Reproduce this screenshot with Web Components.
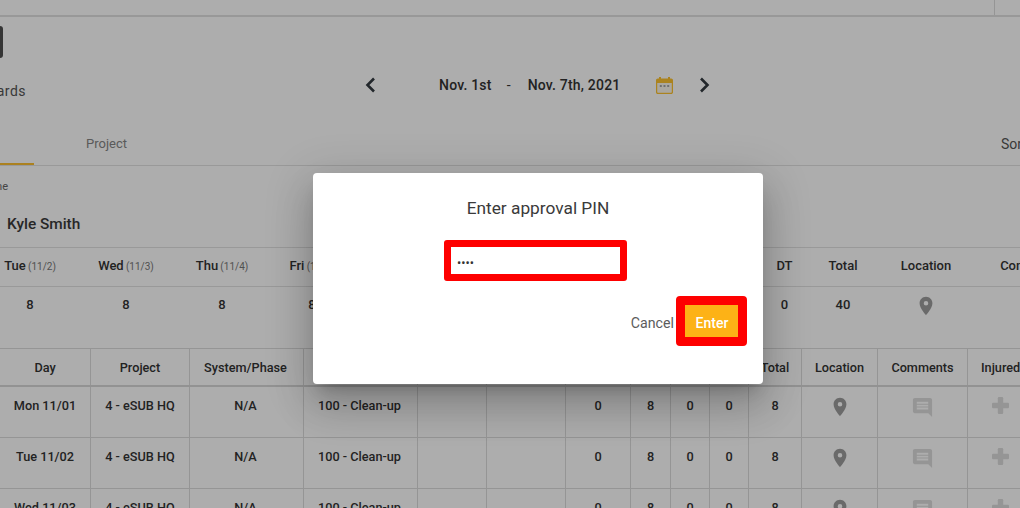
<!DOCTYPE html>
<html lang="en">
<head>
<meta charset="utf-8">
<title>Timecards</title>
<style>
html,body{margin:0;padding:0;background:#fff}
body{font-family:Roboto,"Liberation Sans",sans-serif}
</style>
</head>
<body>
<ts-app></ts-app>
<script>
function def(name, html){
  const t=document.createElement('template');t.innerHTML=html;
  customElements.define(name,class extends HTMLElement{
    constructor(){super();this.attachShadow({mode:'open'}).appendChild(t.content.cloneNode(true));}
  });
}
const PIN='M12 2C8.13 2 5 5.13 5 9c0 5.25 7 13 7 13s7-7.75 7-13c0-3.87-3.13-7-7-7zm0 9.5a2.5 2.5 0 0 1 0-5 2.5 2.5 0 0 1 0 5z';
const COM='M21.99 4c0-1.1-.89-2-1.99-2H4c-1.1 0-2 .9-2 2v12c0 1.1.9 2 2 2h14l4 4-.01-18zM18 14H6v-2h12v2zm0-3H6V9h12v2zm0-3H6V6h12v2z';

def('icon-pin',`<style>:host{display:block;width:22px;height:22px}svg{display:block}</style>
<svg width="22" height="22" viewBox="0 0 24 24"><path fill="#9c9c9c" d="${PIN}"/></svg>`);
def('icon-comment',`<style>:host{display:block;width:23px;height:23px}svg{display:block}</style>
<svg width="23" height="23" viewBox="0 0 24 24"><path fill="#dcdcdc" d="${COM}"/></svg>`);
def('icon-plus',`<style>:host{display:block;width:17px;height:17px;margin-top:1px}svg{display:block}</style>
<svg width="17" height="17" viewBox="0 0 17 17"><rect x="5.8" y="0" width="5.4" height="17" rx="1.2" fill="#dcdcdc"/><rect x="0" y="5.8" width="17" height="5.4" rx="1.2" fill="#dcdcdc"/></svg>`);

def('ts-topbar',`<style>
:host{display:flex;justify-content:flex-end;height:15px;border-bottom:2px solid #e0e0e0;box-sizing:content-box}
i{display:block;width:1px;height:15px;background:#dcdcdc;margin-right:25px}
</style><i></i>`);

def('ts-date-nav',`<style>
:host{display:flex;align-items:center;height:30px;color:#333;font:500 14px/30px Roboto,sans-serif;letter-spacing:.2px;white-space:nowrap}
svg{display:block;flex:none}
.prev{margin-left:365px}
.a{margin-left:63px}
.d{margin-left:15px;width:7px;font-weight:400}
.b{margin-left:14px}
.cal{margin-left:36px}
.next{margin-left:26px}
</style>
<svg class="prev" width="11" height="16" viewBox="0 0 11 16"><path d="M9 1.5 2.5 8 9 14.5" fill="none" stroke="#333a40" stroke-width="2.6"/></svg>
<span class="a">Nov. 1st</span><span class="d">-</span><span class="b">Nov. 7th, 2021</span>
<svg class="cal" width="17" height="17" viewBox="0 0 17 17"><path fill="#fdc22e" fill-rule="evenodd" d="M3 0h2v1.500h7V0h2v1.500h1.200c.9 0 1.800.8 1.800 1.800V15.200c0 1-.9 1.800-1.800 1.800H1.800C.8 17 0 16.200 0 15.200V3.300C0 2.300.8 1.500 1.800 1.500H3zM1.500 6v9.500h14V6z"/><path fill="#fbf7ec" d="M1.500 6h14v9.500h-14z"/><path fill="#a5a5a5" d="M3.800 8h2v2h-2zM7.500 8h2v2h-2zM11.200 8h2v2h-2z"/></svg>
<svg class="next" width="11" height="16" viewBox="0 0 11 16"><path d="M2 1.500 8.500 8 2 14.500" fill="none" stroke="#333a40" stroke-width="2.6"/></svg>`);

def('ts-header',`<style>
:host{display:block;height:83px;box-sizing:border-box;padding-top:9px}
.btn{width:3px;height:32px;margin-bottom:12px;background:#4f4f4f;border-radius:0 3px 3px 0}
.row{display:flex;height:30px}
.crumb{width:26px;flex:none;display:flex;justify-content:flex-end;white-space:nowrap;font:400 14px/42px Roboto,sans-serif;letter-spacing:.5px;color:#555}
ts-date-nav{margin-left:-26px}
</style>
<div class="btn"></div>
<div class="row"><div class="crumb">Timecards</div><ts-date-nav></ts-date-nav></div>`);

def('ts-tabs',`<style>
:host{display:flex;height:66px;border-bottom:1px solid #e2e2e2;box-sizing:border-box;justify-content:space-between;align-items:flex-end;font:400 13px/18px Roboto,sans-serif;color:#858585}
.on{width:34px;height:2px;background:#fdbf30;flex:none}
.p{flex:none;margin:0 0 12px 52px}
.s{flex:1;margin:0 0 12px 874px;font-size:14px;color:#555;white-space:nowrap;overflow:hidden}
</style>
<div class="on"></div><div class="p">Project</div><div class="s">Sort by</div>`);

def('ts-summary',`<style>
:host{display:block;color:#333}
.crumb{width:8px;height:42px;display:flex;justify-content:flex-end;white-space:nowrap;font:400 11px/41px Roboto,sans-serif;color:#666}
.name{height:39px;font:500 15.4px/32px Roboto,sans-serif;padding-left:7px;color:#3a3a3a;box-sizing:border-box}
.g{display:grid;grid-template-columns:96px 96px 96px 84px 400px 61px 56px 110px 102px;margin-left:-18px;width:1101px}
.head{border-top:1px solid #e2e2e2;border-bottom:1px solid #e2e2e2;height:38px;box-sizing:content-box;font:500 13px/35px Roboto,sans-serif;text-align:center;white-space:nowrap;word-spacing:-1px}
.head small{font:400 10px Roboto,sans-serif;color:#777}
.vals{height:61px;font:500 13px/35px Roboto,sans-serif;text-align:center}
.ic{display:flex;justify-content:center;padding-top:8px}
</style>
<div class="crumb">Name</div>
<div class="name">Kyle Smith</div>
<div class="g head"><div>Tue <small>(11/2)</small></div><div>Wed <small>(11/3)</small></div><div>Thu <small>(11/4)</small></div><div>Fri <small>(11/5)</small></div><div></div><div>DT</div><div>Total</div><div>Location</div><div>Comments</div></div>
<div class="g vals"><div>8</div><div>8</div><div>8</div><div>8</div><div></div><div>0</div><div>40</div><div class="ic"><icon-pin></icon-pin></div><div></div></div>`);

def('time-row',`<style>
:host{display:grid;grid-template-columns:91px 99px 114px 114px 69px 79px 65px 40px 39px 39px 53px 76px 90px 60px;height:51px;box-sizing:border-box;border-bottom:1px solid #dcdcdc;font:500 12.7px/18px Roboto,sans-serif;color:#333;text-align:center;white-space:nowrap}
:host([head]){height:39px;border-top:1px solid #dcdcdc;border-bottom:2px solid #d8d8d8}
</style><slot></slot>`);
def('time-cell',`<style>
:host{display:flex;justify-content:center;align-items:flex-start;border-right:1px solid #dcdcdc;padding-top:10px;box-sizing:border-box;min-width:0}
:host([p]){padding-right:2px}
:host([last]){border-right:0;justify-content:flex-start;padding-left:13px}
:host([i]){padding-top:9px}
</style><slot></slot>`);

const dataRow=d=>`<time-row>
<time-cell>${d}</time-cell><time-cell>4 - eSUB HQ</time-cell><time-cell p>N/A</time-cell><time-cell p>100 - Clean-up</time-cell><time-cell></time-cell><time-cell></time-cell>
<time-cell>0</time-cell><time-cell>8</time-cell><time-cell>0</time-cell><time-cell>0</time-cell><time-cell>8</time-cell>
<time-cell i><icon-pin></icon-pin></time-cell><time-cell i><icon-comment></icon-comment></time-cell><time-cell i last style="padding-left:24px"><icon-plus></icon-plus></time-cell>
</time-row>`;

def('ts-table',`<style>:host{display:block}</style>
<time-row head>
<time-cell>Day</time-cell><time-cell>Project</time-cell><time-cell p>System/Phase</time-cell><time-cell></time-cell><time-cell></time-cell><time-cell></time-cell><time-cell></time-cell><time-cell></time-cell><time-cell></time-cell><time-cell></time-cell><time-cell>Total</time-cell><time-cell>Location</time-cell><time-cell>Comments</time-cell><time-cell last>Injured</time-cell>
</time-row>
${dataRow('Mon 11/01')}${dataRow('Tue 11/02')}${dataRow('Wed 11/03')}`);

def('pin-dialog',`<style>
:host{display:flex;flex-direction:column;width:450px;height:211px;background:#fff;border-radius:4px;box-sizing:border-box;padding:24px 16px 0 0;box-shadow:0 11px 15px -7px rgba(0,0,0,.2),0 24px 38px 3px rgba(0,0,0,.14),0 9px 46px 8px rgba(0,0,0,.12)}
h2{margin:0 0 21px 16px;font:400 17.3px/22px Roboto,sans-serif;color:#3a3a3a;text-align:center}
.field{width:183px;height:41px;box-sizing:border-box;border:7px solid #fe0000;border-radius:3px;margin-left:131px;background:#fff;padding-left:6px;font:400 12.5px/31px Roboto,sans-serif;color:#333}
.actions{display:flex;justify-content:flex-end;align-items:center;margin-top:15px}
.cancel{font:400 14.2px/20px Roboto,sans-serif;color:#5c5c5c;margin:3px 2px 0 0}
.enter{box-sizing:border-box;width:71px;height:50px;border:9px solid #fe0000;border-radius:4px;background:#fdb216;color:#fff;font:500 14px/37px Roboto,sans-serif;text-align:center;padding-left:1px}
</style>
<h2>Enter approval PIN</h2>
<div class="field">••••</div>
<div class="actions"><span class="cancel">Cancel</span><div class="enter">Enter</div></div>`);

def('ts-app',`<style>
:host{display:block;width:1020px;height:508px;overflow:hidden;position:relative;background:#fff}
.scrim{position:absolute;inset:0;background:rgba(0,0,0,.32);padding:173px 0 0 313px;box-sizing:border-box}
</style>
<ts-topbar></ts-topbar>
<ts-header></ts-header>
<ts-tabs></ts-tabs>
<ts-summary></ts-summary>
<ts-table></ts-table>
<div class="scrim"><pin-dialog></pin-dialog></div>`);
</script>
</body>
</html>
